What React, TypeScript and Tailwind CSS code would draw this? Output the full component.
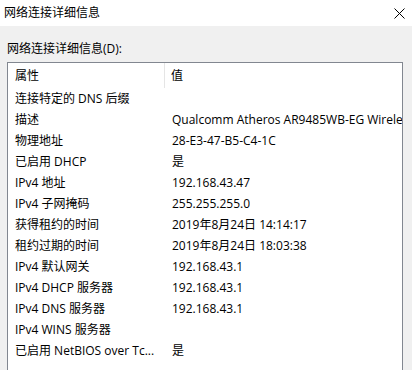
import React from "react";

const rows: [string, string][] = [
  ["连接特定的 DNS 后缀", ""],
  ["描述", "Qualcomm Atheros AR9485WB-EG Wireless Network Adapter"],
  ["物理地址", "28-E3-47-B5-C4-1C"],
  ["已启用 DHCP", "是"],
  ["IPv4 地址", "192.168.43.47"],
  ["IPv4 子网掩码", "255.255.255.0"],
  ["获得租约的时间", "2019年8月24日 14:14:17"],
  ["租约过期的时间", "2019年8月24日 18:03:38"],
  ["IPv4 默认网关", "192.168.43.1"],
  ["IPv4 DHCP 服务器", "192.168.43.1"],
  ["IPv4 DNS 服务器", "192.168.43.1"],
  ["IPv4 WINS 服务器", ""],
  ["已启用 NetBIOS over Tc...", "是"],
];

const font = {
  fontFamily: '"Open Sans", "Noto Sans CJK SC", sans-serif',
};

export default function App() {
  return (
    <div
      className="w-[412px] h-[370px] overflow-hidden bg-[#f0f0f0] text-[12px] text-black"
      style={font}
    >
      <div className="h-[26px] bg-white flex items-center justify-between pl-[4px] pr-[7px]">
        <span className="leading-none">网络连接详细信息</span>
        <svg width="11" height="11" viewBox="0 0 11 11">
          <path d="M0.5 0.5L10.5 10.5M10.5 0.5L0.5 10.5" stroke="#000" strokeWidth="1" />
        </svg>
      </div>
      <div className="pl-[7px] pr-[9px] pt-[15px]">
        <div className="h-[16px] flex items-center leading-none">网络连接详细信息(D):</div>
        <div className="mt-[5px] border border-[#828790] bg-white h-[400px] overflow-hidden">
          <div className="flex h-[25px] items-center">
            <div className="w-[157px] pl-[7px] shrink-0 h-full flex items-center border-r border-[#e5e5e5]">
              属性
            </div>
            <div className="pl-[6px] whitespace-nowrap">值</div>
          </div>
          {rows.map(([k, v], i) => (
            <div key={i} className="flex h-[21px] items-center whitespace-nowrap">
              <div className="w-[158px] pl-[7px] shrink-0 overflow-hidden">{k}</div>
              <div className="pl-[6px] overflow-hidden">{v}</div>
            </div>
          ))}
        </div>
      </div>
    </div>
  );
}
